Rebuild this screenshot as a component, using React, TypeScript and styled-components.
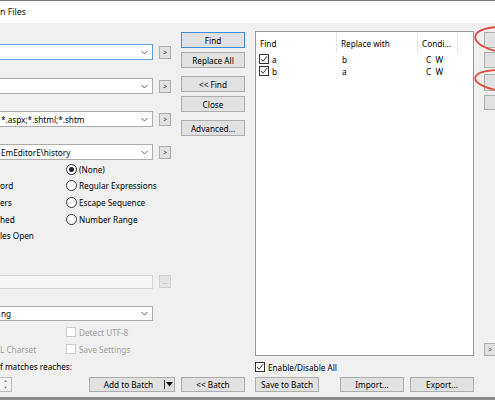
import styled, { createGlobalStyle } from "styled-components";

const GlobalStyle = createGlobalStyle`
  html, body { margin: 0; padding: 0; background: #f0f0f0; }
  body { font-family: "Noto Sans", "Liberation Sans", sans-serif; }
`;

const Chevron = () => (
  <svg width="7" height="5" viewBox="0 0 7 5">
    <polyline points="0.5,1 3.5,4 6.5,1" fill="none" stroke="#606060" strokeWidth="1" />
  </svg>
);

const Tick = () => (
  <svg width="8" height="8" viewBox="0 0 8 8">
    <polyline points="1,4 3,6.3 7,1.2" fill="none" stroke="#333" strokeWidth="1" />
  </svg>
);

export default function App() {
  return (
    <Window>
      <GlobalStyle />
      <TopLine />
      <TitleBar>n Files</TitleBar>

      <Upper>
        <LeftCol>
          <ComboRow $mt={13}>
            <Combo $focus>
              <span />
              <Chevron />
            </Combo>
            <SmallBtn>&gt;</SmallBtn>
          </ComboRow>
          <ComboRow $mt={18}>
            <Combo>
              <span />
              <Chevron />
            </Combo>
            <SmallBtn>&gt;</SmallBtn>
          </ComboRow>
          <ComboRow $mt={17}>
            <Combo>
              <span>*.aspx;*.shtml;*.shtm</span>
              <Chevron />
            </Combo>
            <SmallBtn>&gt;</SmallBtn>
          </ComboRow>
          <ComboRow $mt={17}>
            <Combo>
              <span>EmEditorE\history</span>
              <Chevron />
            </Combo>
            <SmallBtn>&gt;</SmallBtn>
          </ComboRow>

          <Options>
            <span />
            <Radio>
              <RadioDot $checked />
              (None)
            </Radio>
            <span>ord</span>
            <Radio>
              <RadioDot />
              Regular Expressions
            </Radio>
            <span>ers</span>
            <Radio>
              <RadioDot />
              Escape Sequence
            </Radio>
            <span>hed</span>
            <Radio>
              <RadioDot />
              Number Range
            </Radio>
            <span>les Open</span>
            <span />
          </Options>

          <ComboRow $mt={31}>
            <TextBox />
            <SmallBtn $disabled>...</SmallBtn>
          </ComboRow>
          <ComboRow $mt={17}>
            <Combo $h={15}>
              <span>ng</span>
              <Chevron />
            </Combo>
          </ComboRow>

          <CheckGrid>
            <span />
            <Check $disabled>
              <Box $disabled />
              Detect UTF-8
            </Check>
            <Dim>L Charset</Dim>
            <Check $disabled>
              <Box $disabled />
              Save Settings
            </Check>
          </CheckGrid>
          <Caption>f matches reaches:</Caption>
        </LeftCol>

        <MidCol>
          <Btn $mt={1} $primary>Find</Btn>
          <Btn $mt={4}>Replace All</Btn>
          <Btn $mt={8}>&lt;&lt; Find</Btn>
          <Btn $mt={4}>Close</Btn>
          <Btn $mt={8}>Advanced...</Btn>
        </MidCol>

        <RightPane>
          <List>
            <ListHeader>
              <HeadCell>Find</HeadCell>
              <HeadCell>Replace with</HeadCell>
              <HeadCell>Condi...</HeadCell>
              <HeadCell $last />
            </ListHeader>
            <ListBody>
              <ListRow>
                <Cell>
                  <Box>
                    <Tick />
                  </Box>
                  a
                </Cell>
                <Cell>b</Cell>
                <Cell $cond>C&nbsp;&nbsp;W</Cell>
              </ListRow>
              <ListRow>
                <Cell>
                  <Box>
                    <Tick />
                  </Box>
                  b
                </Cell>
                <Cell>a</Cell>
                <Cell $cond>C&nbsp;&nbsp;W</Cell>
              </ListRow>
            </ListBody>
          </List>
          <EnableRow>
            <Box>
              <Tick />
            </Box>
            Enable/Disable All
          </EnableRow>
        </RightPane>

        <SideCol>
          <SideBtn $mt={1} />
          <SideBtn $mt={4} />
          <SideBtn $mt={6} $h={17} />
          <SideBtn $mt={4} $h={15} />
          <SideArrow>&gt;</SideArrow>
        </SideCol>
      </Upper>

      <BottomRow>
        <LeftGroup>
          <Spinner>
            <SpinArrow>▲</SpinArrow>
            <SpinArrow>▼</SpinArrow>
          </Spinner>
          <SplitBtn>
            <SplitMain>Add to Batch</SplitMain>
            <SplitDrop>
              <svg width="7" height="5" viewBox="0 0 7 5">
                <polygon points="0,0 7,0 3.5,4.5" fill="#111" />
              </svg>
            </SplitDrop>
          </SplitBtn>
        </LeftGroup>
        <Btn $w={64}>&lt;&lt; Batch</Btn>
        <RightGroup>
          <Btn $w={64}>Save to Batch</Btn>
          <PairGroup>
            <Btn $w={64}>Import...</Btn>
            <Btn $w={64}>Export...</Btn>
          </PairGroup>
        </RightGroup>
      </BottomRow>
      <Spacer />
      <BottomLine />

      <Marks width="495" height="400" viewBox="0 0 495 400">
        <ellipse cx="506" cy="40" rx="31" ry="12.5" fill="none" stroke="#e04a3f" strokeWidth="1.8" transform="rotate(6 506 40)" />
        <ellipse cx="506" cy="81" rx="31" ry="10.5" fill="none" stroke="#e04a3f" strokeWidth="1.8" transform="rotate(6 506 81)" />
      </Marks>
    </Window>
  );
}

/* ---------- styles ---------- */

const Window = styled.div`
  position: relative;
  width: 495px;
  height: 400px;
  overflow: hidden;
  background: #f0f0f0;
  display: flex;
  flex-direction: column;
  font-size: 8.2px;
  color: #000;
`;

const TopLine = styled.div`
  height: 1px;
  background: #7a7a7a;
`;

const TitleBar = styled.div`
  height: 22px;
  background: #fff;
  display: flex;
  align-items: center;
  font-size: 8.8px;
  color: #111;
  white-space: nowrap;
`;

const Upper = styled.div`
  height: 354px;
  box-sizing: border-box;
  padding-top: 8px;
  display: grid;
  grid-template-columns: 171px 64px 219px 11px;
  column-gap: 10px;
`;

const LeftCol = styled.div`
  display: flex;
  flex-direction: column;
  white-space: nowrap;
`;

const ComboRow = styled.div<{ $mt: number }>`
  display: flex;
  align-items: center;
  gap: 6px;
  margin-top: ${(p) => p.$mt}px;
`;

const Combo = styled.div<{ $focus?: boolean; $h?: number }>`
  width: 153px;
  height: ${(p) => p.$h ?? 16}px;
  box-sizing: border-box;
  border: 1px solid ${(p) => (p.$focus ? "#5a9fe3" : "#acacac")};
  border-left: none;
  background: #fff;
  display: flex;
  align-items: center;
  justify-content: space-between;
  padding: 0 4px 0 1px;
`;

const TextBox = styled.div`
  width: 153px;
  height: 14px;
  box-sizing: border-box;
  border: 1px solid #d4d4d4;
  border-left: none;
  background: #f7f7f7;
`;

const SmallBtn = styled.div<{ $disabled?: boolean }>`
  width: 12px;
  height: 13px;
  box-sizing: border-box;
  border: 1px solid ${(p) => (p.$disabled ? "#cfcfcf" : "#adadad")};
  background: ${(p) => (p.$disabled ? "#e4e4e4" : "#e1e1e1")};
  color: ${(p) => (p.$disabled ? "#a8a8a8" : "#333")};
  font-size: 6.5px;
  display: flex;
  align-items: center;
  justify-content: center;
`;

const Options = styled.div`
  margin-top: 1px;
  display: grid;
  grid-template-columns: 66px 1fr;
  grid-auto-rows: 16.6px;
  align-items: center;
`;

const Radio = styled.div`
  display: flex;
  align-items: center;
  gap: 2px;
`;

const RadioDot = styled.span<{ $checked?: boolean }>`
  width: 11px;
  height: 11px;
  box-sizing: border-box;
  border: 1px solid #333;
  border-radius: 50%;
  background: #fff;
  display: flex;
  align-items: center;
  justify-content: center;
  &::after {
    content: "";
    width: 5px;
    height: 5px;
    border-radius: 50%;
    background: ${(p) => (p.$checked ? "#222" : "transparent")};
  }
`;

const CheckGrid = styled.div`
  margin-top: 3px;
  display: grid;
  grid-template-columns: 66px 1fr;
  grid-auto-rows: 17px;
  align-items: center;
`;

const Check = styled.div<{ $disabled?: boolean }>`
  display: flex;
  align-items: center;
  gap: 3px;
  color: ${(p) => (p.$disabled ? "#a0a0a0" : "#000")};
`;

const Dim = styled.span`
  color: #a0a0a0;
`;

const Box = styled.span<{ $disabled?: boolean }>`
  width: 10px;
  height: 10px;
  box-sizing: border-box;
  border: 1px solid ${(p) => (p.$disabled ? "#cccccc" : "#333")};
  background: #fff;
  display: inline-flex;
  align-items: center;
  justify-content: center;
  flex-shrink: 0;
`;

const Caption = styled.div`
  margin-top: 3px;
  line-height: 12px;
`;

const MidCol = styled.div`
  display: flex;
  flex-direction: column;
`;

const Btn = styled.div<{ $mt?: number; $primary?: boolean; $w?: number }>`
  ${(p) => (p.$w ? `width: ${p.$w}px;` : "")}
  height: ${(p) => (p.$w ? 15 : 16)}px;
  margin-top: ${(p) => p.$mt ?? 0}px;
  box-sizing: border-box;
  border: 1px solid ${(p) => (p.$primary ? "#3d8ee0" : "#adadad")};
  background: #e1e1e1;
  display: flex;
  align-items: center;
  justify-content: center;
  white-space: nowrap;
`;

const RightPane = styled.div`
  display: flex;
  flex-direction: column;
`;

const List = styled.div`
  height: 325px;
  box-sizing: border-box;
  border: 1px solid #9a9a9a;
  background: #fff;
`;

const ListHeader = styled.div`
  height: 20px;
  display: grid;
  grid-template-columns: 81px 81px 40px 1fr;
`;

const HeadCell = styled.div<{ $last?: boolean }>`
  display: flex;
  align-items: center;
  padding: 2px 0 0 4px;
  border-right: ${(p) => (p.$last ? "none" : "1px solid #e5e5e5")};
`;

const ListBody = styled.div`
  padding-top: 1px;
`;

const ListRow = styled.div`
  height: 12px;
  display: grid;
  grid-template-columns: 81px 81px 40px 1fr;
  align-items: center;
`;

const Cell = styled.div<{ $cond?: boolean }>`
  display: flex;
  align-items: center;
  gap: 3px;
  padding-left: ${(p) => (p.$cond ? 8 : 3)}px;
  &:nth-child(2) {
    padding-left: 5px;
  }
`;

const EnableRow = styled.div`
  margin-top: 6px;
  height: 10px;
  display: flex;
  align-items: center;
  gap: 3px;
`;

const SideCol = styled.div`
  display: flex;
  flex-direction: column;
`;

const SideBtn = styled.div<{ $mt: number; $h?: number }>`
  width: 20px;
  height: ${(p) => p.$h ?? 16}px;
  margin-top: ${(p) => p.$mt}px;
  box-sizing: border-box;
  border: 1px solid #adadad;
  background: #e1e1e1;
`;

const SideArrow = styled(SmallBtn)`
  margin-top: auto;
  margin-bottom: 21px;
`;

const BottomRow = styled.div`
  height: 15px;
  display: flex;
  gap: 6px;
`;

const LeftGroup = styled.div`
  width: 175px;
  display: flex;
  justify-content: space-between;
`;

const Spinner = styled.div`
  width: 12px;
  box-sizing: border-box;
  border: 1px solid #bdbdbd;
  border-left: none;
  background: #f4f4f4;
  display: flex;
  flex-direction: column;
  justify-content: space-around;
  align-items: center;
`;

const SpinArrow = styled.span`
  font-size: 4px;
  line-height: 4px;
  color: #777;
`;

const SplitBtn = styled.div`
  width: 86px;
  box-sizing: border-box;
  border: 1px solid #adadad;
  background: #e1e1e1;
  display: flex;
`;

const SplitMain = styled.div`
  flex: 1;
  display: flex;
  align-items: center;
  justify-content: center;
  padding-left: 3px;
`;

const SplitDrop = styled.div`
  width: 9px;
  border-left: 1px solid #333;
  margin: 2px 0;
  display: flex;
  align-items: center;
  justify-content: center;
`;

const RightGroup = styled.div`
  width: 219px;
  margin-left: 4px;
  display: flex;
  justify-content: space-between;
`;

const PairGroup = styled.div`
  display: flex;
  gap: 6px;
`;

const Spacer = styled.div`
  flex: 1;
`;

const BottomLine = styled.div`
  height: 3px;
  background: #8a8a8a;
`;

const Marks = styled.svg`
  position: absolute;
  top: 0;
  left: 0;
  pointer-events: none;
`;
